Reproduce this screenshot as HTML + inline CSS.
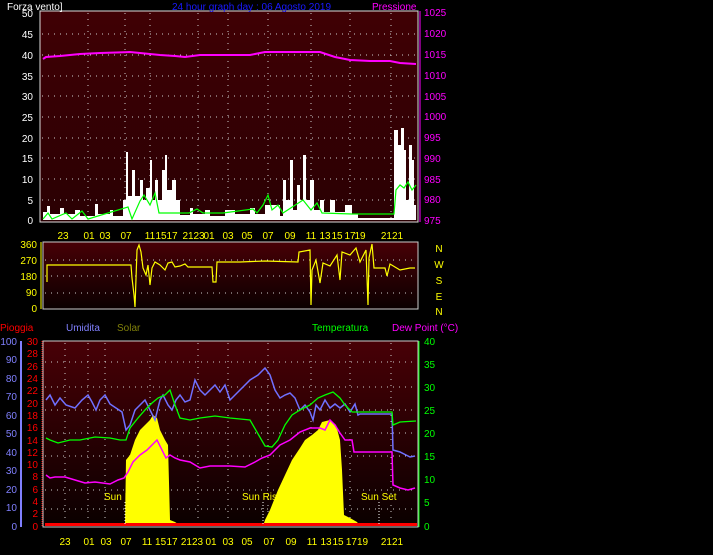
<!DOCTYPE html>
<html><head><meta charset="utf-8"><style>
html,body{margin:0;padding:0;background:#000;width:713px;height:555px;overflow:hidden}
svg{display:block}
text{font-family:"Liberation Sans",sans-serif;font-size:10px}
</style></head><body>
<svg width="713" height="555" viewBox="0 0 713 555" xmlns="http://www.w3.org/2000/svg">
<defs>
<linearGradient id="g1" x1="0" y1="0" x2="0" y2="1"><stop offset="0" stop-color="#400004"/><stop offset="1" stop-color="#2a0003"/></linearGradient>
<linearGradient id="g2" x1="0" y1="0" x2="0" y2="1"><stop offset="0" stop-color="#480006"/><stop offset="1" stop-color="#0a0000"/></linearGradient>
</defs>
<!-- TOP CHART -->
<rect x="40" y="11" width="378" height="211" fill="url(#g1)" stroke="#ddd" stroke-width="1"/>
<g stroke="#ccc" stroke-width="1" stroke-dasharray="1 5">
<line x1="42" y1="34" x2="416" y2="34"/><line x1="42" y1="55" x2="416" y2="55"/><line x1="42" y1="76" x2="416" y2="76"/><line x1="42" y1="96" x2="416" y2="96"/><line x1="42" y1="117" x2="416" y2="117"/><line x1="42" y1="138" x2="416" y2="138"/><line x1="42" y1="158" x2="416" y2="158"/><line x1="42" y1="179" x2="416" y2="179"/><line x1="42" y1="200" x2="416" y2="200"/>
<line x1="88" y1="13" x2="88" y2="220"/><line x1="125" y1="13" x2="125" y2="220"/><line x1="150" y1="13" x2="150" y2="220"/><line x1="198" y1="13" x2="198" y2="220"/><line x1="228" y1="13" x2="228" y2="220"/><line x1="268" y1="13" x2="268" y2="220"/><line x1="311" y1="13" x2="311" y2="220"/><line x1="350" y1="13" x2="350" y2="220"/><line x1="391" y1="13" x2="391" y2="220"/>
</g>
<text x="7" y="10" fill="#fff" font-size="11">Forza vento]</text>
<text x="172" y="10" fill="#1a1aff" font-size="11">24 hour graph day : 06 Agosto 2019</text>
<text x="372" y="10" fill="#ff00ff" font-size="11">Pressione</text>
<g fill="#fff" text-anchor="end">
<text x="33" y="17">50</text><text x="33" y="38">45</text><text x="33" y="59">40</text><text x="33" y="80">35</text><text x="33" y="100">30</text><text x="33" y="121">25</text><text x="33" y="142">20</text><text x="33" y="162">15</text><text x="33" y="183">10</text><text x="33" y="204">5</text><text x="33" y="224">0</text>
</g>
<g fill="#ff00ff" font-size="9">
<text x="424" y="16">1025</text><text x="424" y="37">1020</text><text x="424" y="58">1015</text><text x="424" y="79">1010</text><text x="424" y="100">1005</text><text x="424" y="120">1000</text><text x="424" y="141">995</text><text x="424" y="162">990</text><text x="424" y="183">985</text><text x="424" y="203">980</text><text x="424" y="224">975</text>
</g>
<line x1="420" y1="11" x2="420" y2="222" stroke="#ff00ff"/>
<polyline fill="none" stroke="#ff00ff" stroke-width="2" points="43,59 46,57 60,56 70,55 80,54 100,53 130,52 140,53 150,54 160,55 175,56 185,57 200,55 230,55 250,55 265,52 320,52 335,57 350,60 370,61 390,61 400,63 416,64"/>
<polygon fill="#fff" points="43,220 43,212 47,212 47,206 50,206 50,214 60,214 60,208 64,208 64,214 75,214 75,210 80,210 80,216 95,216 95,204 98,204 98,214 110,214 110,210 113,210 113,216 123,216 123,200 126,200 126,152 128,152 128,196 132,196 132,170 135,170 135,196 140,196 140,180 143,180 143,200 146,200 146,188 150,188 150,160 152,160 152,200 155,200 155,180 158,180 158,200 162,200 162,170 165,170 165,155 167,155 167,190 172,190 172,180 176,180 176,200 180,200 180,215 190,215 190,208 193,208 193,214 205,214 205,210 210,210 210,216 225,216 225,210 235,210 235,214 250,214 250,208 255,208 255,214 265,214 265,205 280,205 280,216 283,216 283,180 286,180 286,200 290,200 290,160 293,160 293,210 297,210 297,185 300,185 300,200 303,200 303,155 306,155 306,200 310,200 310,180 314,180 314,210 320,210 320,200 324,200 324,212 330,212 330,200 335,200 335,212 345,212 345,205 352,205 352,214 358,214 358,218 394,218 394,130 398,130 398,145 401,145 401,128 404,128 404,150 406,150 406,200 409,200 409,145 412,145 412,160 414,160 414,205 416,205 416,220"/>
<polyline fill="none" stroke="#0f0" stroke-width="1.2" points="43,219 48,213 52,219 66,213 72,219 82,211 88,219 128,207 132,219 140,201 144,195 150,205 155,193 159,213 189,213 197,209 203,213 223,213 253,209 257,213 263,205 268,195 272,210 278,205 283,213 303,200 311,210 317,203 322,213 352,214 394,214 396,190 400,185 404,188 408,182 412,190 416,185"/>
<g fill="#ff0" font-size="9" text-anchor="middle">
<text x="63" y="239">23</text><text x="89" y="239">01</text><text x="105" y="239">03</text><text x="126" y="239">07</text><text x="150" y="239">11</text><text x="161" y="239">15</text><text x="172" y="239">17</text><text x="188" y="239">21</text><text x="199" y="239">23</text><text x="209" y="239">01</text><text x="228" y="239">03</text><text x="247" y="239">05</text><text x="268" y="239">07</text><text x="290" y="239">09</text><text x="311" y="239">11</text><text x="325" y="239">13</text><text x="337" y="239">15</text><text x="350" y="239">17</text><text x="360" y="239">19</text><text x="392" y="239">2121</text>
</g>
<!-- MIDDLE CHART -->
<rect x="43" y="242" width="375" height="67" fill="url(#g2)" stroke="#ccc"/>
<g stroke="#ccc" stroke-dasharray="1 5"><line x1="45" y1="260" x2="416" y2="260"/><line x1="45" y1="276" x2="416" y2="276"/><line x1="45" y1="293" x2="416" y2="293"/></g>
<g fill="#ff0" font-size="9" text-anchor="end">
<text x="37" y="248">360</text><text x="37" y="264">270</text><text x="37" y="280">180</text><text x="37" y="296">90</text><text x="37" y="312">0</text>
</g>
<line x1="41" y1="242" x2="41" y2="309" stroke="#ff0"/>
<g fill="#ff0" font-size="12" text-anchor="middle">
<text x="439" y="252">N</text><text x="439" y="268">W</text><text x="439" y="284">S</text><text x="439" y="300">E</text><text x="439" y="315">N</text>
</g>
<polyline fill="none" stroke="#ff0" stroke-width="1.2" points="47,282 47,265 131,265 132,278 134,295 135,307 137,250 139,245 141,252 143,268 146,275 148,265 150,285 152,268 155,262 160,265 165,270 168,263 172,262 175,267 180,266 185,264 188,267 212,267 213,282 216,282 217,262 240,262 265,261 298,262 299,252 310,250 311,305 312,270 316,260 320,283 323,263 330,266 337,255 340,280 342,252 350,255 356,248 360,262 366,250 368,305 369,258 372,244 374,268 385,268 387,276 390,264 400,270 410,268 415,268"/>
<!-- BOTTOM CHART -->
<rect x="43" y="341" width="375" height="186" fill="url(#g2)" stroke="#ccc"/>
<g stroke="#ccc" stroke-dasharray="1 5">
<line x1="45" y1="362" x2="416" y2="362"/><line x1="45" y1="387" x2="416" y2="387"/><line x1="45" y1="410" x2="416" y2="410"/><line x1="45" y1="433" x2="416" y2="433"/><line x1="45" y1="456" x2="416" y2="456"/><line x1="45" y1="490" x2="416" y2="490"/><line x1="45" y1="509" x2="416" y2="509"/>
<line x1="65" y1="343" x2="65" y2="525"/><line x1="88" y1="343" x2="88" y2="525"/><line x1="105" y1="343" x2="105" y2="525"/><line x1="150" y1="343" x2="150" y2="525"/><line x1="198" y1="343" x2="198" y2="525"/><line x1="228" y1="343" x2="228" y2="525"/><line x1="268" y1="343" x2="268" y2="525"/><line x1="311" y1="343" x2="311" y2="525"/><line x1="350" y1="343" x2="350" y2="525"/><line x1="391" y1="343" x2="391" y2="525"/>
</g>
<text x="0" y="331" fill="#f00" font-size="11">Pioggia</text>
<text x="66" y="331" fill="#8080ff" font-size="11">Umidita</text>
<text x="117" y="331" fill="#80800a" font-size="11">Solar</text>
<text x="312" y="331" fill="#0f0" font-size="11">Temperatura</text>
<text x="392" y="331" fill="#ff00ff" font-size="11">Dew Point (°C)</text>
<g fill="#8080ff" font-size="9" text-anchor="end">
<text x="17" y="345">100</text><text x="17" y="363">90</text><text x="17" y="382">80</text><text x="17" y="400">70</text><text x="17" y="419">60</text><text x="17" y="437">50</text><text x="17" y="456">40</text><text x="17" y="474">30</text><text x="17" y="493">20</text><text x="17" y="511">10</text><text x="17" y="530">0</text>
</g>
<line x1="21" y1="341" x2="21" y2="527" stroke="#8080ff" stroke-width="2"/>
<g fill="#f00" font-size="9" text-anchor="end">
<text x="38" y="345">30</text><text x="38" y="357">28</text><text x="38" y="370">26</text><text x="38" y="382">24</text><text x="38" y="394">22</text><text x="38" y="407">20</text><text x="38" y="419">18</text><text x="38" y="431">16</text><text x="38" y="444">14</text><text x="38" y="456">12</text><text x="38" y="468">10</text><text x="38" y="480">8</text><text x="38" y="493">6</text><text x="38" y="505">4</text><text x="38" y="517">2</text><text x="38" y="530">0</text>
</g>
<line x1="42" y1="341" x2="42" y2="527" stroke="#f00" stroke-dasharray="1 1"/>
<g fill="#0f0" font-size="9">
<text x="424" y="345">40</text><text x="424" y="368">35</text><text x="424" y="391">30</text><text x="424" y="414">25</text><text x="424" y="437">20</text><text x="424" y="460">15</text><text x="424" y="483">10</text><text x="424" y="506">5</text><text x="424" y="530">0</text>
</g>
<line x1="419" y1="341" x2="419" y2="527" stroke="#0f0"/>
<path fill="#ff0" d="M125,526L126,460L130,455L135,440L140,430L145,425L150,420L153,415L157,418L160,430L165,440L168,445L170,520L175,522L178,524L180,526Z M263,526L265,520L270,510L278,490L285,475L292,460L300,448L305,440L312,435L318,430L322,422L330,420L336,425L340,440L342,470L344,515L350,518L357,522L360,526Z"/>
<rect x="45" y="523" width="372" height="3" fill="#f00"/>
<polyline fill="none" stroke="#7070ff" stroke-width="1.5" points="46,400 50,395 55,405 60,398 66,405 75,408 82,400 88,395 92,402 96,410 100,400 105,395 110,404 116,408 122,412 126,430 130,425 135,410 140,405 145,400 150,410 155,420 160,400 163,395 168,405 172,410 176,400 180,395 185,402 190,400 195,380 200,390 205,395 210,390 215,385 220,392 225,385 230,400 235,395 240,390 250,380 258,375 265,368 270,375 275,390 280,398 285,395 290,393 295,398 300,410 305,405 310,412 313,420 316,405 320,410 325,400 330,408 335,404 340,408 345,404 350,412 355,404 358,415 360,414 392,414 393,450 400,452 410,457 415,456"/>
<polyline fill="none" stroke="#0f0" stroke-width="1.3" points="46,438 50,440 58,443 70,440 80,440 95,437 110,438 120,440 126,440 130,428 138,418 145,410 152,403 158,398 165,395 170,390 175,405 180,418 190,420 200,418 215,416 230,418 250,420 265,446 272,447 278,440 285,425 292,415 300,410 310,405 318,398 325,395 333,392 340,398 345,405 352,412 355,412 392,412 393,425 400,422 416,421"/>
<polyline fill="none" stroke="#ff00ff" stroke-width="1.5" points="46,475 50,478 55,477 65,477 75,480 85,483 95,482 110,484 118,480 124,478 128,472 133,462 140,455 147,450 152,445 157,440 162,450 166,458 170,455 175,458 180,460 190,462 200,468 210,466 230,466 245,467 255,462 262,458 270,455 280,445 290,440 300,432 310,428 320,428 325,430 330,420 335,425 340,433 345,440 352,440 354,452 356,452 392,452 393,485 400,488 408,490 415,488"/>
<g stroke="#fff" stroke-dasharray="1 2"><line x1="125" y1="502" x2="125" y2="526"/><line x1="263" y1="502" x2="263" y2="526"/><line x1="379" y1="502" x2="379" y2="526"/></g>
<g fill="#ff0" font-size="10">
<text x="104" y="500">Sun R</text><text x="242" y="500">Sun Rise</text><text x="361" y="500">Sun Set</text>
</g>
<g fill="#ff0" font-size="9" text-anchor="middle">
<text x="65" y="545">23</text><text x="89" y="545">01</text><text x="106" y="545">03</text><text x="126" y="545">07</text><text x="154" y="545">11 15</text><text x="172" y="545">17</text><text x="192" y="545">2123</text><text x="211" y="545">01</text><text x="228" y="545">03</text><text x="247" y="545">05</text><text x="269" y="545">07</text><text x="291" y="545">09</text><text x="312" y="545">11</text><text x="326" y="545">13</text><text x="338" y="545">15</text><text x="357" y="545">1719</text><text x="392" y="545">2121</text>
</g>
</svg>
</body></html>
